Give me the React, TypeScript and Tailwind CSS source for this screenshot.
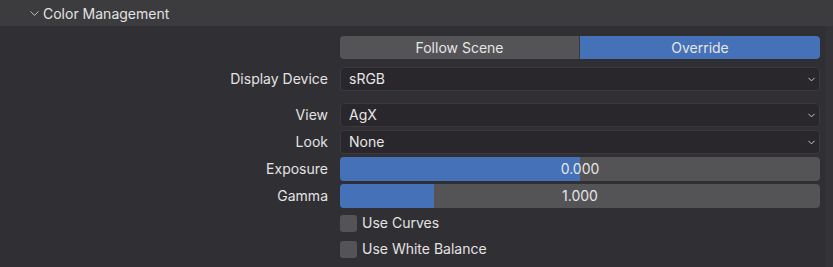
import { ChevronDown } from 'lucide-react'

const font = { fontFamily: 'Inter, "Noto Sans", "DejaVu Sans", sans-serif' }

const Label = ({ text }: { text: string }) => (
	<div className="w-[340px] shrink-0 pr-[12px] text-right text-[14px] leading-[20px] text-[#e3e3e3]">{text}</div>
)

const Dropdown = ({ value }: { value: string }) => (
	<div className="flex h-[24px] w-[480px] items-center justify-between rounded-[4px] border border-[#3b393e] bg-[#29272b] pl-[8px] pr-[2px] text-[14px] leading-[20px] text-[#e6e6e6]">
		<span>{value}</span>
		<ChevronDown size={11} strokeWidth={2} className="text-[#d6d6d6]" />
	</div>
)

const Slider = ({ value, pct }: { value: string; pct: number }) => (
	<div className="relative flex h-[24px] w-[480px] items-center justify-center overflow-hidden rounded-[4px] bg-[#545356] text-[14px] leading-[20px] text-[#e6e6e6]">
		<div className="absolute inset-y-0 left-0 bg-[#4571b8]" style={{ width: `${pct}%` }} />
		<span className="relative">{value}</span>
	</div>
)

const Check = ({ text }: { text: string }) => (
	<div className="flex h-[26px] items-center pl-[340px]">
		<div className="h-[17px] w-[17px] rounded-[3px] bg-[#545356]" />
		<span className="ml-[5px] text-[14px] leading-[20px] text-[#e3e3e3]">{text}</span>
	</div>
)

export default function App() {
	return (
		<div className="relative h-[267px] w-[833px] overflow-hidden bg-[#302f33]" style={font}>
			<div className="flex h-[26px] items-center bg-[#3c3b3e] pl-[27px] text-[14px] text-[#e3e3e3]">
				<ChevronDown size={15} strokeWidth={1.4} className="text-[#cfcfcf]" />
				<span className="ml-[1px]">Color Management</span>
			</div>

			<div className="pt-[10px]">
				<div className="flex pl-[340px]">
					<div className="flex h-[23px] w-[480px] overflow-hidden rounded-[4px] text-[14px] text-[#e6e6e6]">
						<div className="flex w-[239px] items-center justify-center bg-[#545356]">Follow Scene</div>
						<div className="w-px bg-[#3a393c]" />
						<div className="flex flex-1 items-center justify-center bg-[#4571b8]">Override</div>
					</div>
				</div>

				<div className="mt-[8px] flex items-center">
					<Label text="Display Device" />
					<Dropdown value="sRGB" />
				</div>

				<div className="mt-[12px] flex flex-col gap-[3px]">
					<div className="flex items-center">
						<Label text="View" />
						<Dropdown value="AgX" />
					</div>
					<div className="flex items-center">
						<Label text="Look" />
						<Dropdown value="None" />
					</div>
					<div className="flex items-center">
						<Label text="Exposure" />
						<Slider value="0.000" pct={50} />
					</div>
					<div className="flex items-center">
						<Label text="Gamma" />
						<Slider value="1.000" pct={19.5} />
					</div>
				</div>

				<div className="mt-[2px]">
					<Check text="Use Curves" />
					<Check text="Use White Balance" />
				</div>
			</div>

			<div className="absolute right-0 top-[26px] bottom-0 w-[7px] bg-[#343337]" />
		</div>
	)
}
